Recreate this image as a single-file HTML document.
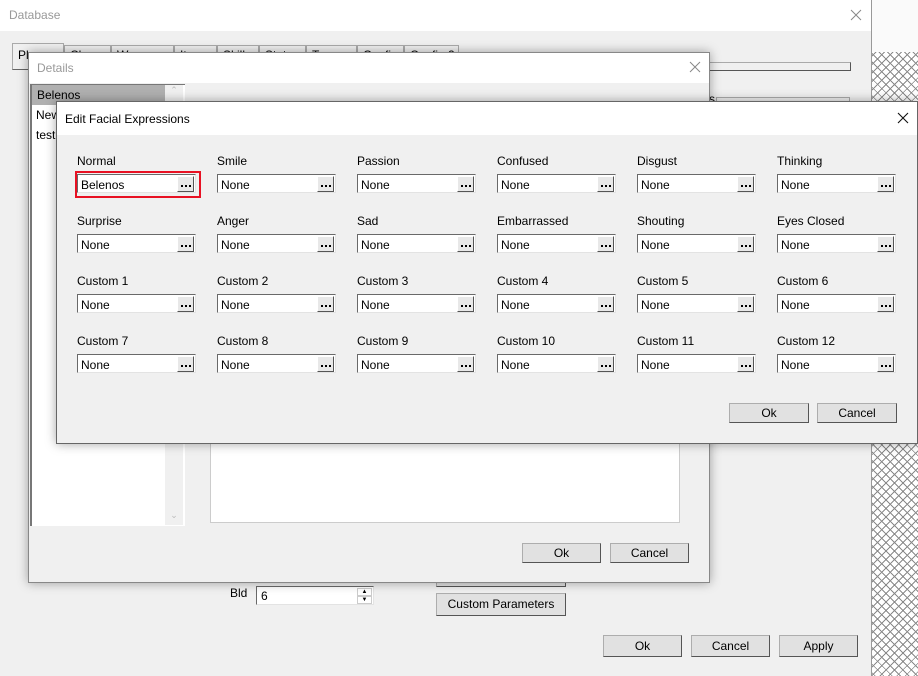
<!DOCTYPE html>
<html><head><meta charset="utf-8"><style>
*{box-sizing:border-box;margin:0;padding:0}
body{width:918px;height:676px;overflow:hidden;background:#f0f0f0;position:relative;font-family:"Liberation Sans",Tahoma,sans-serif;font-size:12px;color:#000}
.a{position:absolute}
.win{position:absolute;background:#f0f0f0;border:1px solid #888;box-shadow:0 0 10px rgba(0,0,0,.35)}
.tb{position:absolute;left:0;right:0;top:0;background:#fff}
.x{position:absolute;width:12px;height:12px}
.btn{position:absolute;background:#e1e1e1;border:1px solid #adadad;border-right-color:#555;border-bottom-color:#555;text-align:center;line-height:18px;font-size:12px}
.lbl{position:absolute;font-size:12px}
.box{position:absolute;width:119px;height:19px;background:#fff;border:1px solid #a0a0a0;border-top-color:#696969;border-left-color:#696969;border-right-color:#e3e3e3;border-bottom-color:#e3e3e3;padding-left:3px;line-height:18px}
.dd{position:absolute;right:1px;top:1px;width:17px;height:16px;background:#e8e8e8;border:1px solid #fff;border-right-color:#555;border-bottom-color:#555}
.dd i{position:absolute;top:8px;width:2px;height:2px;background:#000}
.tab{position:absolute;top:45px;height:24px;border:1px solid #aaa;border-bottom:none;background:#f0f0f0;padding:2px 5px 0;font-size:12px;white-space:nowrap;overflow:hidden}
</style></head><body>
<div class="a" style="left:871px;top:0;width:47px;height:52px;background:#fafafa"></div>
<div class="a" style="left:871px;top:52px;width:47px;height:624px;background:repeating-linear-gradient(45deg,#fff 0 2.5px,#8a8a8a 2.5px 3.5px,#fff 3.5px 6px),#fff"><div style="width:100%;height:100%;background:repeating-linear-gradient(-45deg,transparent 0 2.5px,#8a8a8a 2.5px 3.5px,transparent 3.5px 6px)"></div></div>
<div class="a" style="left:0;top:0;width:872px;height:676px;background:#f0f0f0;border-right:1px solid #999">
 <div class="tb" style="height:31px"></div>
 <div class="a" style="left:9px;top:8px;color:#999;font-size:12px">Database</div>
 <svg class="x" style="left:850px;top:9px" viewBox="0 0 12 12"><path d="M1 1L11 11M11 1L1 11" stroke="#888" stroke-width="1"/></svg>
 <div class="tab" style="left:12px;top:43px;width:52px;height:27px;border:1px solid #aaa;border-bottom-color:#666;padding-top:4px">Players</div>
 <div class="tab" style="left:64px;width:47px">Classes</div>
 <div class="tab" style="left:111px;width:63px">Weapons</div>
 <div class="tab" style="left:174px;width:43px">Items</div>
 <div class="tab" style="left:217px;width:42px">Skills</div>
 <div class="tab" style="left:259px;width:47px">States</div>
 <div class="tab" style="left:306px;width:51px">Terms</div>
 <div class="tab" style="left:357px;width:47px">Config</div>
 <div class="tab" style="left:404px;width:55px">Config 2</div>
 <div class="a" style="left:700px;top:62px;width:151px;height:9px;border:1px solid #aaa;border-right-color:#555;border-bottom-color:#555;background:#f0f0f0"></div>
 <div class="a" style="left:709px;top:92px">s</div>
 <div class="a" style="left:716px;top:97px;width:134px;height:6px;border:1px solid #aaa;border-bottom:none"></div>
 <div class="a" style="left:230px;top:586px">Bld</div>
 <div class="a" style="left:256px;top:586px;width:118px;height:19px;background:#fff;border:1px solid #696969;border-right-color:#e3e3e3;border-bottom-color:#e3e3e3;padding-left:4px;line-height:18px">6
  <div class="a" style="right:1px;top:1px;width:15px;height:8px;border:1px solid #ccc;font-size:6px;line-height:6px;text-align:center">▲</div>
  <div class="a" style="right:1px;top:9px;width:15px;height:8px;border:1px solid #ccc;font-size:6px;line-height:6px;text-align:center">▼</div>
 </div>
 <div class="btn" style="left:436px;top:570px;width:130px;height:17px"></div>
 <div class="btn" style="left:436px;top:593px;width:130px;height:23px;line-height:21px">Custom Parameters</div>
 <div class="btn" style="left:603px;top:635px;width:79px;height:22px;line-height:20px">Ok</div>
 <div class="btn" style="left:691px;top:635px;width:79px;height:22px;line-height:20px">Cancel</div>
 <div class="btn" style="left:779px;top:635px;width:79px;height:22px;line-height:20px">Apply</div>
</div>
<div class="win" style="left:28px;top:52px;width:682px;height:531px">
 <div class="tb" style="height:30px"></div>
 <div class="a" style="left:8px;top:8px;color:#999">Details</div>
 <svg class="x" style="left:660px;top:8px" viewBox="0 0 12 12"><path d="M1 1L11 11M11 1L1 11" stroke="#888" stroke-width="1"/></svg>
 <div class="a" style="left:1px;top:31px;width:155px;height:442px;background:#fff;border-left:2px solid #777;border-top:1px solid #777"></div>
 <div class="a" style="left:3px;top:32px;width:133px;height:20px;background:#b0b0b0;padding:3px 5px">Belenos</div>
 <div class="a" style="left:136px;top:32px;width:18px;height:440px;background:#f0f0f0;color:#bbb;font-size:9px;text-align:center">⌃<div class="a" style="left:0;bottom:4px;width:18px">⌄</div></div>
 <div class="a" style="left:7px;top:55px">New</div>
 <div class="a" style="left:7px;top:75px">test</div>
 <div class="a" style="left:181px;top:385px;width:470px;height:85px;background:#fff;border:1px solid #ccc"></div>
 <div class="btn" style="left:493px;top:490px;width:79px;height:20px">Ok</div>
 <div class="btn" style="left:581px;top:490px;width:79px;height:20px">Cancel</div>
</div>
<div class="win" style="left:56px;top:101px;width:862px;height:343px;border-color:#666">
 <div class="tb" style="height:33px"></div>
 <div class="a" style="left:8px;top:10px">Edit Facial Expressions</div>
 <svg class="x" style="left:840px;top:10px" viewBox="0 0 12 12"><path d="M1 1L11 11M11 1L1 11" stroke="#111" stroke-width="1.1"/></svg>
</div>
<div id="f"></div>
<div class="a" style="left:75px;top:171px;width:126px;height:27px;border:2px solid #e81123"></div>
<div class="btn" style="left:729px;top:403px;width:80px;height:20px">Ok</div>
<div class="btn" style="left:817px;top:403px;width:80px;height:20px">Cancel</div>
<script>
var L=[["Normal","Smile","Passion","Confused","Disgust","Thinking"],["Surprise","Anger","Sad","Embarrassed","Shouting","Eyes Closed"],["Custom 1","Custom 2","Custom 3","Custom 4","Custom 5","Custom 6"],["Custom 7","Custom 8","Custom 9","Custom 10","Custom 11","Custom 12"]];
var h="";
for(var r=0;r<4;r++)for(var c=0;c<6;c++){var x=77+140*c,y=154+60*r;
h+='<div class="lbl" style="left:'+x+'px;top:'+y+'px">'+L[r][c]+'</div><div class="box" style="left:'+x+'px;top:'+(y+20)+'px;padding-top:1px">'+(r==0&&c==0?"Belenos":"None")+'<div class="dd"><i style="left:3px"></i><i style="left:7px"></i><i style="left:11px"></i></div></div>';}
document.getElementById("f").innerHTML=h;
</script>
</body></html>
